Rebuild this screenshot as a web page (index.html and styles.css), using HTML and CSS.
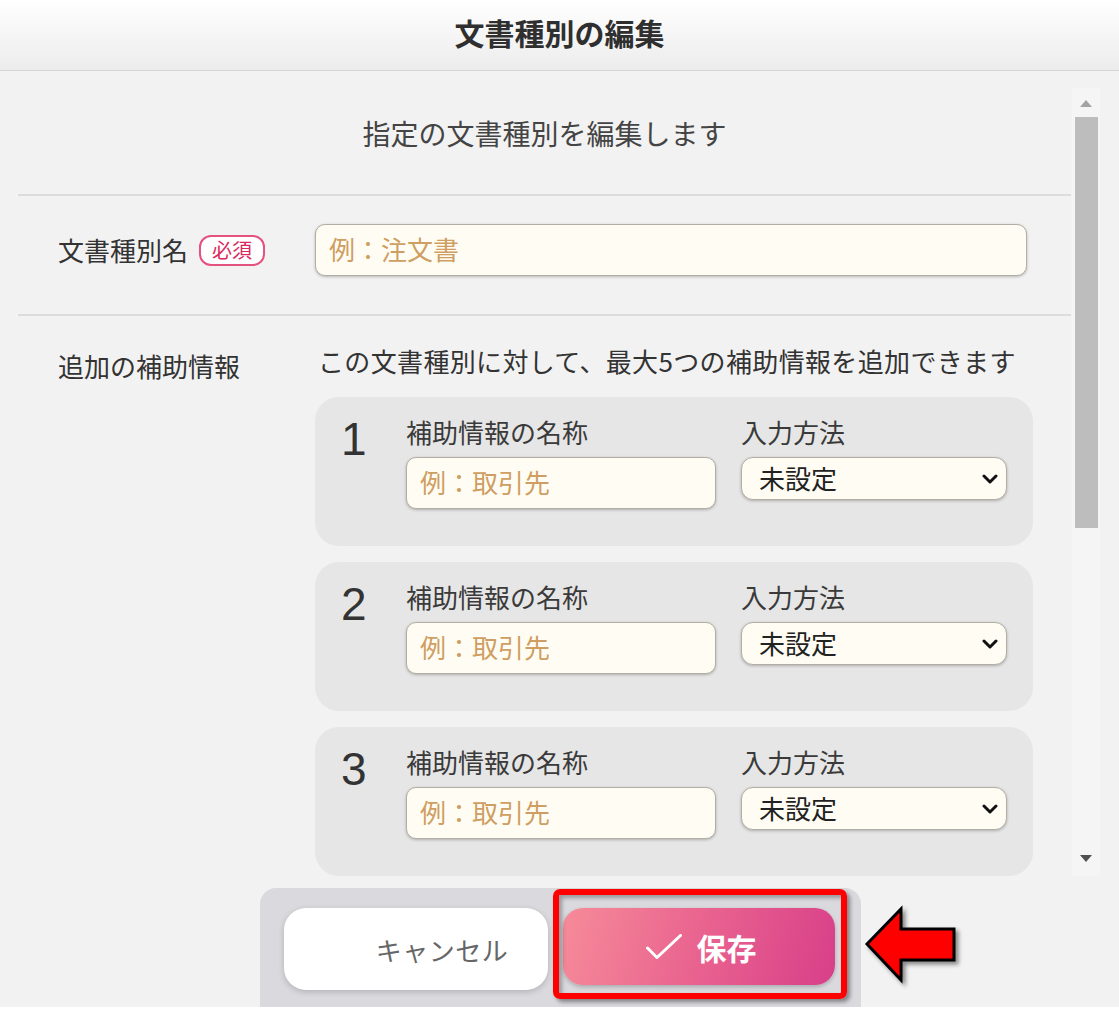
FILE: index.html
```html
<!DOCTYPE html>
<html lang="ja">
<head>
<meta charset="utf-8">
<title>文書種別の編集</title>
<link rel="stylesheet" href="styles.css">
</head>
<body>
<div class="app">
  <header class="header"><h1 class="title">文書種別の編集</h1></header>
  <div class="main">
    <div class="content">
      <p class="intro">指定の文書種別を編集します</p>
      <div class="row row-name">
        <div class="label">文書種別名<span class="badge">必須</span></div>
        <input class="text-input name-input" type="text" placeholder="例：注文書">
      </div>
      <div class="row row-extra">
        <div class="label label-extra">追加の補助情報</div>
        <div class="field">
          <p class="desc">この文書種別に対して、最大5つの補助情報を追加できます</p>
          <div class="cards">
            <div class="card">
              <div class="card-num">1</div>
              <div class="col-name"><div class="card-label">補助情報の名称</div><input class="text-input" type="text" placeholder="例：取引先"></div>
              <div class="col-method"><div class="card-label">入力方法</div><div class="select-wrap"><select class="select"><option>未設定</option></select><svg class="chevron" width="16" height="10" viewBox="0 0 16 10"><path d="M2 2 L8 8 L14 2" fill="none" stroke="#111" stroke-width="3" stroke-linecap="round" stroke-linejoin="round"/></svg></div></div>
            </div>
            <div class="card">
              <div class="card-num">2</div>
              <div class="col-name"><div class="card-label">補助情報の名称</div><input class="text-input" type="text" placeholder="例：取引先"></div>
              <div class="col-method"><div class="card-label">入力方法</div><div class="select-wrap"><select class="select"><option>未設定</option></select><svg class="chevron" width="16" height="10" viewBox="0 0 16 10"><path d="M2 2 L8 8 L14 2" fill="none" stroke="#111" stroke-width="3" stroke-linecap="round" stroke-linejoin="round"/></svg></div></div>
            </div>
            <div class="card">
              <div class="card-num">3</div>
              <div class="col-name"><div class="card-label">補助情報の名称</div><input class="text-input" type="text" placeholder="例：取引先"></div>
              <div class="col-method"><div class="card-label">入力方法</div><div class="select-wrap"><select class="select"><option>未設定</option></select><svg class="chevron" width="16" height="10" viewBox="0 0 16 10"><path d="M2 2 L8 8 L14 2" fill="none" stroke="#111" stroke-width="3" stroke-linecap="round" stroke-linejoin="round"/></svg></div></div>
            </div>
          </div>
        </div>
      </div>
    </div>
    <div class="scrollbar">
      <div class="sb-btn"><span class="tri-up"></span></div>
      <div class="sb-thumb"></div>
      <div class="sb-rest"></div>
      <div class="sb-btn sb-btn-down"><span class="tri-down"></span></div>
    </div>
  </div>
  <footer class="footer">
    <div class="actions">
      <button class="btn btn-cancel" type="button">キャンセル</button>
      <button class="btn btn-save" type="button"><svg class="check" width="36" height="26" viewBox="0 0 36 26"><path d="M1.5 14 L11 23.5 L34.5 1.5" fill="none" stroke="#fff" stroke-width="3" stroke-linecap="round" stroke-linejoin="round"/></svg><span>保存</span></button>
      <div class="highlight"></div>
    </div>
    <svg class="arrow" width="100" height="84" viewBox="0 0 100 84"><path d="M5 40 L39 5 L39 25 L92 25 L92 56 L39 56 L39 76 Z" fill="#ff0000" stroke="#000" stroke-width="3" stroke-linejoin="miter"/></svg>
  </footer>
</div>
</body>
</html>
```

FILE: styles.css
```css
* { box-sizing: border-box; }
html, body { margin: 0; padding: 0; background: #ffffff; }
body { font-family: "Noto Sans CJK JP", "Noto Sans", sans-serif; color: #333; }

.app { width: 1119px; height: 1007px; background: #f2f2f2; display: flex; flex-direction: column; overflow: hidden; }

.header { height: 71px; flex: none; display: flex; justify-content: center; background: linear-gradient(#ffffff, #ececec); border-bottom: 1px solid #d6d6d6; }
.title { margin: 0; font-size: 30px; line-height: 64px; font-weight: 700; color: #2f2f2f; }

.main { height: 817px; flex: none; display: flex; }
.content { width: 1053px; margin-left: 18px; overflow: hidden; }

.intro { margin: 0; padding: 42px 0 41px; text-align: center; font-size: 28px; line-height: 40px; color: #444; }

.row { border-top: 2px solid #dcdcdc; display: flex; padding-left: 40px; }
.row-name { align-items: center; padding-top: 28px; padding-bottom: 38px; }
.label { width: 257px; flex: none; display: flex; align-items: center; font-size: 26px; line-height: 36px; color: #333; }
.label-extra { align-self: flex-start; padding-top: 5px; }
.badge { margin-left: 11px; height: 31px; padding: 0 11px; border: 2px solid #e4527f; border-radius: 12px; background: #fff; color: #d92a60; font-size: 20px; line-height: 26px; display: inline-flex; align-items: center; }

.text-input { height: 52px; width: 100%; border: 1.5px solid #b3aea4; border-radius: 10px; background: #fffdf3; box-shadow: 0 1px 3px rgba(0,0,0,0.25); padding: 0 0 3px 13px; font-family: inherit; font-size: 26px; color: #333; outline: none; }
.text-input::placeholder { color: #cf9e62; }
.name-input { width: 712px; }

.row-extra { padding-top: 27px; }
.field { width: 718px; }
.desc { margin: 0 0 18px 3px; font-size: 26px; line-height: 36px; letter-spacing: 0.35px; color: #333; white-space: nowrap; }

.cards { display: flex; flex-direction: column; gap: 16px; }
.card { width: 718px; height: 149px; background: #e6e6e6; border-radius: 24px; display: flex; padding: 18px 26px 0 26px; }
.card-num { width: 65px; flex: none; margin-top: 1px; font-family: "Liberation Sans", Arial, sans-serif; font-size: 46px; line-height: 46px; color: #333; }
.col-name { width: 310px; flex: none; }
.col-method { width: 266px; flex: none; margin-left: 25px; }
.card-label { font-size: 26px; line-height: 34px; margin-bottom: 8px; color: #3a3a3a; white-space: nowrap; }

.select-wrap { position: relative; height: 43px; }
.select { appearance: none; -webkit-appearance: none; width: 100%; height: 43px; border: 1.5px solid #b3aea4; border-radius: 12px; background: #fffdf3; box-shadow: 0 1px 3px rgba(0,0,0,0.25); padding: 0 0 2px 17px; font-family: inherit; font-size: 26px; color: #222; outline: none; }
.chevron { position: absolute; right: 9px; top: 17px; pointer-events: none; }

.scrollbar { width: 28px; flex: none; margin: 17px 0 0 1px; height: 788px; background: #f5f5f5; display: flex; flex-direction: column; }
.sb-btn { height: 29px; flex: none; display: flex; align-items: center; justify-content: center; padding-top: 1px; }
.sb-btn-down { height: 28px; align-items: flex-start; padding-top: 7px; }
.tri-up { width: 0; height: 0; border-left: 6px solid transparent; border-right: 6px solid transparent; border-bottom: 7px solid #a3a3a3; }
.tri-down { width: 0; height: 0; border-left: 6px solid transparent; border-right: 6px solid transparent; border-top: 7px solid #505050; }
.sb-thumb { height: 411px; flex: none; width: 23px; margin-left: 3px; background: #bdbdbd; }
.sb-rest { flex: 1; }

.footer { height: 119px; flex: none; display: flex; justify-content: center; position: relative; padding-left: 2px; }
.actions { width: 601px; height: 119px; position: relative; display: flex; align-items: flex-start; gap: 15px; padding: 20px 26px 0 24px; background: #d9d9de; border-radius: 16px 16px 0 0; }
.btn { border: none; font-family: inherit; cursor: pointer; display: flex; align-items: center; justify-content: center; }
.btn-cancel { width: 264px; height: 82px; border-radius: 22px; background: #fff; box-shadow: 0 2px 6px rgba(0,0,0,0.18); padding-left: 58px; font-size: 26px; letter-spacing: 0.5px; color: #666; }
.btn-save { width: 272px; height: 77px; border-radius: 20px; background: linear-gradient(105deg, #f68b99 0%, #e9638f 50%, #d83f89 100%); box-shadow: 0 2px 4px rgba(0,0,0,0.22); gap: 15px; font-size: 30px; font-weight: 700; color: #fff; padding: 0 0 0 4px; }
.check { flex: none; }

.highlight { position: absolute; left: 293px; top: 1px; width: 294px; height: 110px; border: 6px solid #ff0000; border-radius: 7px; box-shadow: 3px 3px 4px rgba(0,0,0,0.4), inset 3px 3px 4px rgba(0,0,0,0.3); pointer-events: none; }

.arrow { position: absolute; left: 862px; top: 16px; filter: drop-shadow(3px 3px 2px rgba(0,0,0,0.45)); }
```
